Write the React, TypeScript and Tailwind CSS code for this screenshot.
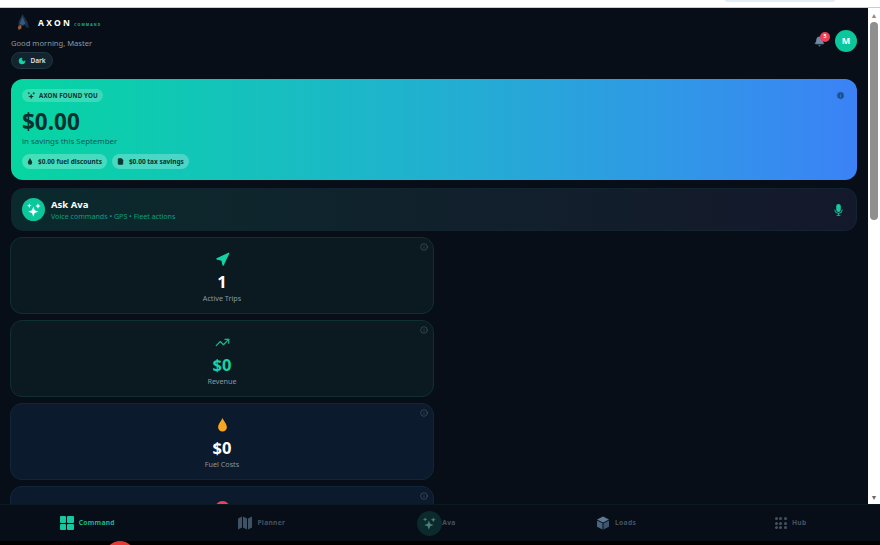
import React from "react";
import { Bell, Moon, Info, TrendingUp, FileText, Navigation } from "lucide-react";

function Sparkles({ className }: { className?: string }) {
  return (
    <svg viewBox="0 0 24 24" fill="currentColor" className={className}>
      <path d="M11 7l2 5.500 5.500 2-5.500 2L11 22l-2-5.500-5.500-2 5.500-2z" />
      <path d="M18 2l1.200 2.800L22 6l-2.800 1.200L18 10l-1.200-2.800L14 6l2.800-1.200z" />
      <path d="M5 2l1 2.500L8.500 5.500 6 6.500 5 9 4 6.500 1.500 5.500 4 4.500z" />
    </svg>
  );
}

function Drop({ className }: { className?: string }) {
  return (
    <svg viewBox="0 0 12 16" fill="currentColor" className={className}>
      <path d="M6 0C7 3 11 6.500 11 10.500A5 5 0 0 1 1 10.500C1 6.500 5 3 6 0z" />
    </svg>
  );
}

function MicIcon() {
  return (
    <svg viewBox="0 0 12 16" className="w-[9px] h-[12px] text-[#14c9a0]" fill="currentColor">
      <rect x="3" y="0" width="6" height="10.500" rx="3" />
      <path d="M1 7.500a5 5 0 0 0 10 0" fill="none" stroke="currentColor" strokeWidth="1.200" />
      <rect x="5.400" y="12" width="1.200" height="2.500" />
      <rect x="3.500" y="14.500" width="5" height="1.200" />
    </svg>
  );
}

function Logo() {
  return (
    <svg viewBox="0 0 18 18" className="w-[17px] h-[17px]">
      <path d="M8 0l5 8 2 7-5-3-7 3 1-7z" fill="#1d3046" />
      <path d="M8 3l3 7-3 2-3-2z" fill="#35597c" />
      <path d="M3 14l3-3 1 4-3 2z" fill="#9c5a34" />
      <path d="M11 11l3 4-3-1z" fill="#16263c" />
    </svg>
  );
}

function MapIcon() {
  return (
    <svg viewBox="0 0 14 14" fill="#3e5266" className="w-[14px] h-[14px]">
      <path d="M0 2.500L4 0.500V11.500L0 13.500z" />
      <path d="M5 0.500L9 2.500V13.500L5 11.500z" />
      <path d="M10 2.500L14 0.500V11.500L10 13.500z" />
    </svg>
  );
}

function CubeIcon() {
  return (
    <svg viewBox="0 0 14 14" className="w-[14px] h-[14px]">
      <path d="M7 0.500L13 3.500 7 6.500 1 3.500z" fill="#5f7a96" />
      <path d="M1 4.500L6.500 7.300V13.500L1 10.700z" fill="#4a6480" />
      <path d="M13 4.500L7.500 7.300V13.500L13 10.700z" fill="#3e556e" />
    </svg>
  );
}

function StatCard({
  icon,
  value,
  label,
  blue,
  valueClass,
}: {
  icon: React.ReactNode;
  value?: string;
  label?: string;
  blue?: boolean;
  valueClass?: string;
}) {
  return (
    <div
      className={`relative h-[77px] shrink-0 rounded-xl border flex flex-col items-center pt-[12px] ${
        blue ? "bg-[#0b1a2c] border-[#12263a]" : "bg-[#0a1a20] border-[#10302f]"
      }`}
    >
      <Info strokeWidth={1.5} className="absolute top-[5px] right-[5px] w-[8px] h-[8px] text-[#5b6b78]" />
      <div className="h-[18px] flex items-center justify-center">{icon}</div>
      {value && <div className={`text-[16.500px] leading-[22px] mt-[3px] font-bold ${valueClass ?? "text-white"}`}>{value}</div>}
      {label && <div className="text-[7.200px] leading-[12px] -mt-[1px] text-[#8a97a3]">{label}</div>}
    </div>
  );
}

function NavItem({ icon, label, active }: { icon: React.ReactNode; label: string; active?: boolean }) {
  return (
    <div className="flex-1 flex items-center justify-center gap-[5px]">
      {icon}
      <span className={`text-[6.700px] font-bold tracking-[0.3px] ${active ? "text-[#10b98f]" : "text-[#445262]"}`}>{label}</span>
    </div>
  );
}

export default function App() {
  return (
    <div className="h-[545px] w-[880px] flex flex-col overflow-hidden bg-white font-['Noto_Sans',sans-serif]">
      {/* browser strip */}
      <div className="h-[8px] shrink-0 bg-white border-b border-[#c9ccd0] flex justify-end pr-[45px]">
        <div className="w-[110px] h-[2px] bg-[#e3edf8] rounded-b" />
      </div>

      <div className="flex-1 min-h-0 flex">
        <div className="flex-1 min-w-0 bg-[#070e17] overflow-hidden">
          {/* header */}
          <div className="flex justify-between pl-[11px] pr-[11px] pt-[5px]">
            <div>
              <div className="flex items-center h-[18px] pl-[4px]">
                <Logo />
                <span className="ml-[6px] mt-[3px] text-[8.500px] font-bold tracking-[2.300px] text-white">AXON</span>
                <span className="ml-[2px] mt-[5px] text-[3.500px] font-bold tracking-[1.100px] text-[#10b98f]">COMMAND</span>
              </div>
              <div className="text-[7.600px] leading-[12px] mt-[6px] text-[#8d99a5]">Good morning, Master</div>
              <div className="mt-[3px] w-[42px] h-[17px] rounded-full bg-[#14242f] border border-[#1f3644] flex items-center justify-center gap-[4px]">
                <Moon className="w-[8px] h-[8px] text-[#14d3a6] fill-[#14d3a6]" />
                <span className="text-[6.500px] font-semibold text-[#dce3ea]">Dark</span>
              </div>
            </div>
            <div className="flex items-center gap-[10px] h-[22px] mt-[17px]">
              <div className="relative">
                <Bell className="w-[11px] h-[11px] text-[#6f8ba8] fill-[#6f8ba8]" />
                <div className="absolute -top-[4px] -right-[5px] w-[10px] h-[10px] rounded-full bg-[#ef4058] text-white text-[5px] font-bold flex items-center justify-center">
                  5
                </div>
              </div>
              <div className="w-[22px] h-[22px] rounded-full bg-[#0cc79b] text-white text-[9px] font-bold flex items-center justify-center">M</div>
            </div>
          </div>

          <div className="pl-[11px] pr-[11px]">
            {/* savings hero */}
            <div className="relative mt-[10px] h-[101px] rounded-xl bg-gradient-to-r from-[#06d6a0] to-[#3b82f6] pl-[11px] pt-[10px]">
              <Info className="absolute top-[12px] right-[12px] w-[9px] h-[9px] text-[#3b82f6] fill-[#1d4f8a]" />
              <div className="w-fit h-[13px] px-[5px] rounded-full bg-white/20 flex items-center gap-[3px] text-[#06352f]">
                <Sparkles className="w-[9px] h-[9px]" />
                <span className="text-[6.200px] font-bold tracking-[0.1px]">AXON FOUND YOU</span>
              </div>
              <div className="text-[22.500px] leading-[28px] mt-[6px] font-bold text-[#06312f]">$0.00</div>
              <div className="text-[7.900px] leading-[11px] text-[#0a5a5a]">in savings this September</div>
              <div className="flex gap-[5px] mt-[7px]">
                <div className="h-[15px] px-[5px] rounded-full bg-white/25 flex items-center gap-[5px] text-[#06352f]">
                  <Drop className="w-[6px] h-[7px]" />
                  <span className="text-[6.500px] font-bold">$0.00 fuel discounts</span>
                </div>
                <div className="h-[15px] px-[5px] rounded-full bg-white/25 flex items-center gap-[5px] text-[#06352f]">
                  <FileText className="w-[7px] h-[7px] fill-current" />
                  <span className="text-[6.500px] font-bold">$0.00 tax savings</span>
                </div>
              </div>
            </div>

            {/* ask ava */}
            <div className="mt-[8px] h-[43px] rounded-xl border border-[#122430] bg-gradient-to-r from-[#0a2a2d] to-[#14182b] flex items-center pl-[10px] pr-[13px]">
              <div className="w-[23px] h-[23px] rounded-full bg-[#0cc79b] flex items-center justify-center text-white">
                <Sparkles className="w-[16px] h-[16px]" />
              </div>
              <div className="ml-[6px] flex-1">
                <div className="text-[9.500px] leading-[13px] font-bold text-white">Ask Ava</div>
                <div className="text-[7.100px] leading-[10px] text-[#0f9d82]">Voice commands • GPS • Fleet actions</div>
              </div>
              <MicIcon />
            </div>
          </div>

          {/* stat cards */}
          <div className="mt-[6px] ml-[10px] w-[424px] flex flex-col gap-[6px]">
            <StatCard
              icon={<Navigation className="w-[15px] h-[15px] text-[#14d3a6] fill-[#14d3a6]" />}
              value="1"
              label="Active Trips"
            />
            <StatCard
              icon={<TrendingUp className="w-[15px] h-[15px] text-[#14b896]" />}
              value="$0"
              label="Revenue"
              valueClass="text-[#14d3a6]"
            />
            <StatCard blue icon={<Drop className="w-[11px] h-[14px] text-[#f5a623]" />} value="$0" label="Fuel Costs" />
            {/* only the top of this card is on screen, its text is below the fold */}
            <StatCard
              blue
              icon={
                <div className="w-[15px] h-[15px] rounded-full bg-[#ef4058] flex justify-center pt-[3px]">
                  <div className="w-[3px] h-[3px] bg-[#4a1822] rounded-[1px]" />
                </div>
              }
            />
          </div>
        </div>

        {/* scrollbar */}
        <div className="w-[12px] shrink-0 bg-white flex flex-col items-center">
          <div className="h-[14px] flex items-center justify-center text-[#8a8a8a] text-[7px] leading-none">▲</div>
          <div className="w-[8px] h-[198px] rounded bg-[#8f8f8f]" />
          <div className="flex-1" />
          <div className="h-[14px] flex items-center justify-center text-[#6a6a6a] text-[7px] leading-none">▼</div>
        </div>
      </div>

      {/* bottom nav */}
      <div className="h-[37px] shrink-0 bg-[#070e17] border-t border-[#0c1822] flex pr-[2px]">
        <NavItem
          active
          label="Command"
          icon={
            <div className="grid grid-cols-2 gap-[1px] w-[14px] h-[14px]">
              <div className="bg-[#14c9a0] rounded-[1px]" />
              <div className="bg-[#14c9a0] rounded-[1px]" />
              <div className="bg-[#14c9a0] rounded-[1px]" />
              <div className="bg-[#14c9a0] rounded-[1px]" />
            </div>
          }
        />
        <NavItem label="Planner" icon={<MapIcon />} />
        <div className="flex-1 flex items-center justify-center pr-[5px]">
          <div className="w-[25px] h-[25px] rounded-full bg-[#0b2a2b] flex items-center justify-center text-[#4a7f7c]">
            <Sparkles className="w-[15px] h-[15px]" />
          </div>
          <span className="text-[6.700px] font-bold tracking-[0.3px] text-[#445262]">Ava</span>
        </div>
        <NavItem label="Loads" icon={<CubeIcon />} />
        <NavItem
          label="Hub"
          icon={
            <div className="grid grid-cols-3 gap-[1.500px] w-[12px]">
              {Array.from({ length: 9 }).map((_, i) => (
                <div key={i} className="w-[3px] h-[3px] rounded-full bg-[#445262]" />
              ))}
            </div>
          }
        />
      </div>

      {/* cut-off strip under the page */}
      <div className="h-[4px] shrink-0 bg-black overflow-hidden pl-[105px]">
        <div className="w-[30px] h-[30px] rounded-full bg-[#e53935]" />
      </div>
    </div>
  );
}
